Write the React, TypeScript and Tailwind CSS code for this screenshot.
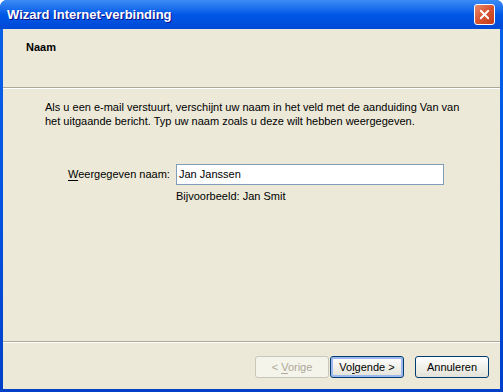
import { X } from "lucide-react";

function XpButton({ parts, disabled, focused }: { parts: [string, string, string]; disabled?: boolean; focused?: boolean }) {
  const [pre, key, post] = parts;
  return (
    <button
      className={`w-[74px] h-[22px] rounded-[3px] border text-[11px] flex items-center justify-center ${
        disabled
          ? "border-[#C9C7BA] bg-[#F5F4EA] text-[#ACA899]"
          : focused
          ? "border-[#003C74] bg-gradient-to-b from-[#FFFFFF] to-[#E3E2D8] text-black shadow-[inset_0_0_0_2px_#9DB9EB]"
          : "border-[#003C74] bg-gradient-to-b from-[#FFFFFF] to-[#E3E2D8] text-black"
      }`}
    >
      <span className="whitespace-pre">
        {pre}
        {key && <span className="underline underline-offset-2">{key}</span>}
        {post}
      </span>
    </button>
  );
}

export default function App() {
  return (
    <div className="w-[503px] h-[392px] flex flex-col rounded-t-[7px] overflow-hidden bg-gradient-to-b from-[#0A62E8] via-[#0054E3] to-[#0040C8] font-['Liberation_Sans',Arial,sans-serif]">
      <div className="h-[29px] flex items-center justify-between pl-[7px] pr-[8px] bg-gradient-to-b from-[#3B8CF5] via-[#0058E6] to-[#0048D6]">
        <span className="text-white font-bold text-[13px] [text-shadow:1px_1px_0_#0F1089]">
          Wizard Internet-verbinding
        </span>
        <div className="w-[21px] h-[21px] rounded-[3px] border border-white bg-gradient-to-br from-[#E98A6E] via-[#D9532F] to-[#C13B1A] flex items-center justify-center">
          <X size={15} strokeWidth={3} className="text-white" />
        </div>
      </div>

      <div className="flex-1 mx-[3px] mb-[3px] bg-[#ECE9D8] flex flex-col text-[11px] text-black">
        <div className="h-[58px] pl-[23px] pt-[10px]">
          <span className="font-bold">Naam</span>
        </div>
        <div className="border-t border-[#ACA899] border-b border-b-white" />

        <div className="flex-1 pl-[42px] pt-[11px]">
          <p className="leading-[14px]">
            Als u een e-mail verstuurt, verschijnt uw naam in het veld met de aanduiding Van van
            <br />
            het uitgaande bericht. Typ uw naam zoals u deze wilt hebben weergegeven.
          </p>

          <div className="flex items-center mt-[36px] pl-[23px]">
            <span className="w-[108px]">
              <span className="underline underline-offset-2">W</span>eergegeven naam:
            </span>
            <div className="w-[268px] h-[21px] border border-[#7F9DB9] bg-white flex items-center px-[2px]">
              Jan Janssen
            </div>
          </div>
          <div className="pl-[131px] mt-[3px]">Bijvoorbeeld: Jan Smit</div>
        </div>

        <div className="border-t border-[#ACA899] border-b border-b-white" />
        <div className="h-[46px] flex items-start justify-end pt-[13px] pr-[11px]">
          <XpButton parts={["< ", "V", "orige"]} disabled />
          <div className="w-[1px]" />
          <XpButton parts={["Vo", "l", "gende >"]} focused />
          <div className="w-[11px]" />
          <XpButton parts={["Annuleren", "", ""]} />
        </div>
      </div>
    </div>
  );
}
